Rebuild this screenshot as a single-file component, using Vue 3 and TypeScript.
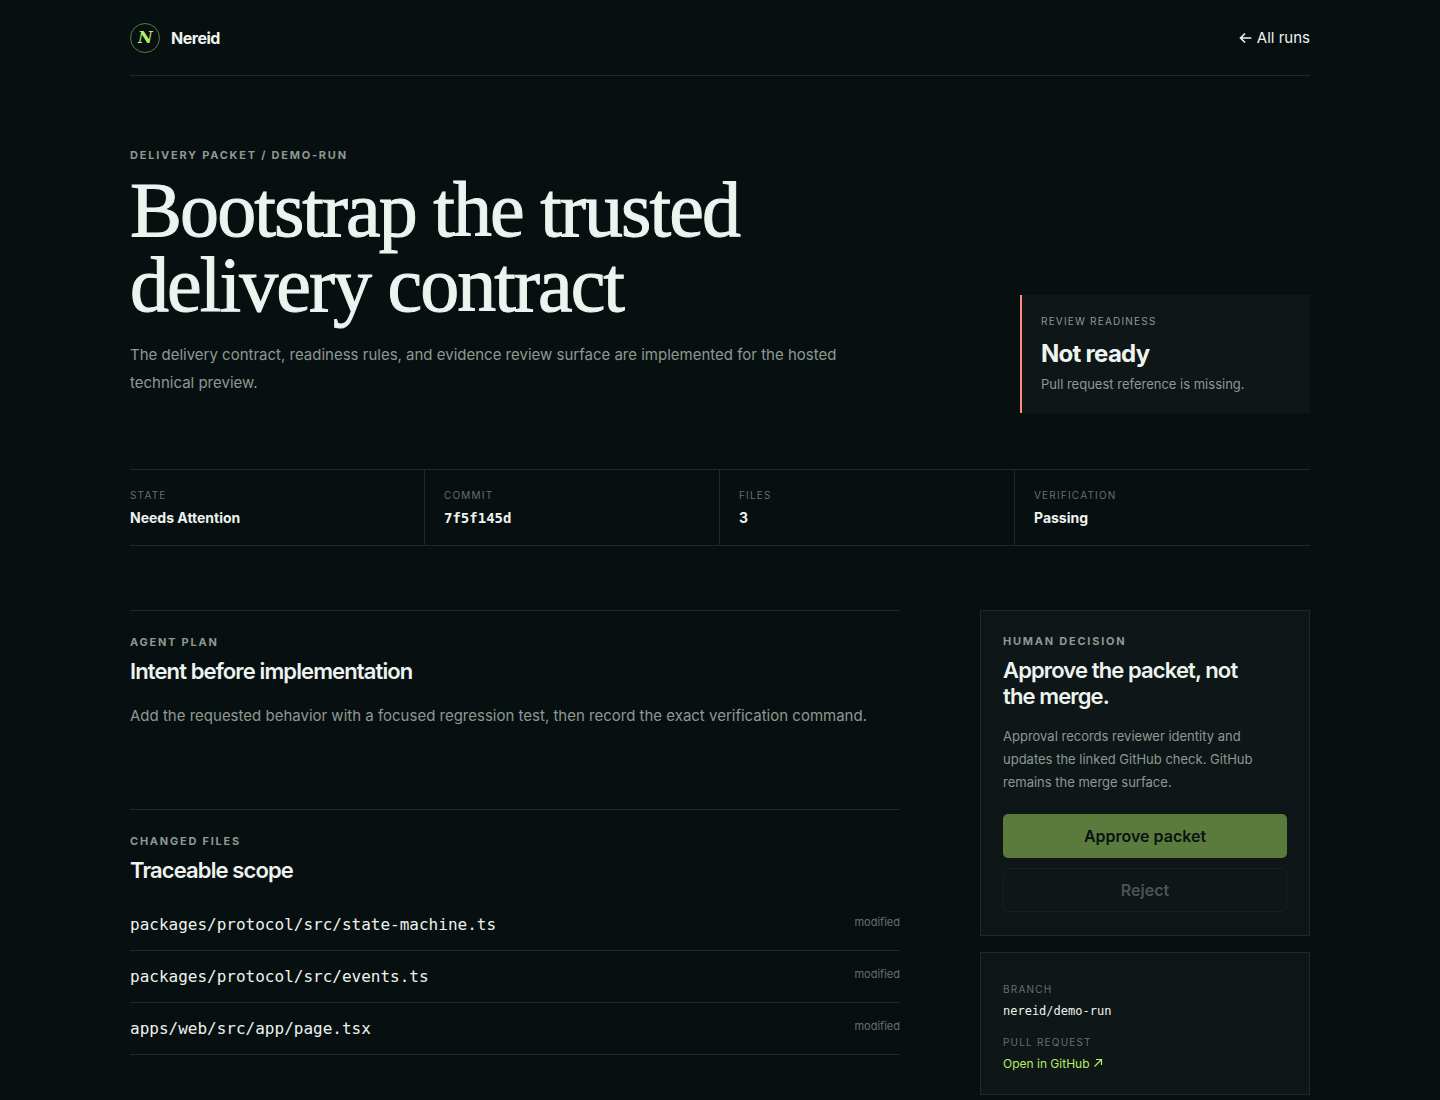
<script setup lang="ts">
interface Fact {
  label: string
  value: string
  mono?: boolean
}

interface ChangedFile {
  path: string
  status: string
}

const facts: Fact[] = [
  { label: 'State', value: 'Needs Attention' },
  { label: 'Commit', value: '7f5f145d', mono: true },
  { label: 'Files', value: '3' },
  { label: 'Verification', value: 'Passing' },
]

const files: ChangedFile[] = [
  { path: 'packages/protocol/src/state-machine.ts', status: 'modified' },
  { path: 'packages/protocol/src/events.ts', status: 'modified' },
  { path: 'apps/web/src/app/page.tsx', status: 'modified' },
]
</script>

<template>
  <div class="page">
    <header class="topbar">
      <a class="brand" href="#">
        <span class="mark">N</span>
        <span>Nereid</span>
      </a>
      <a class="back" href="#">
        <svg class="arrow" viewBox="0 0 12 12" aria-hidden="true">
          <path d="M11.8 6H1M5.5 1.5L1 6l4.5 4.5" />
        </svg>
        All runs
      </a>
    </header>

    <section class="hero">
      <div class="intro">
        <p class="eyebrow">Delivery packet / demo-run</p>
        <h1>Bootstrap the trusted delivery contract</h1>
        <p class="lede">
          The delivery contract, readiness rules, and evidence review surface are implemented for
          the hosted technical preview.
        </p>
      </div>
      <div class="readiness">
        <span class="readiness-label">Review readiness</span>
        <strong>Not ready</strong>
        <p>Pull request reference is missing.</p>
      </div>
    </section>

    <dl class="facts">
      <div v-for="fact in facts" :key="fact.label" class="fact">
        <dt class="label">{{ fact.label }}</dt>
        <dd :class="{ mono: fact.mono }">{{ fact.value }}</dd>
      </div>
    </dl>

    <div class="columns">
      <main>
        <section class="block plan">
          <p class="eyebrow">Agent plan</p>
          <h2>Intent before implementation</h2>
          <p class="copy">
            Add the requested behavior with a focused regression test, then record the exact
            verification command.
          </p>
        </section>
        <section class="block">
          <p class="eyebrow">Changed files</p>
          <h2>Traceable scope</h2>
          <ul class="files">
            <li v-for="file in files" :key="file.path">
              <code>{{ file.path }}</code>
              <span>{{ file.status }}</span>
            </li>
          </ul>
        </section>
      </main>

      <aside>
        <section class="panel decision">
          <p class="eyebrow">Human decision</p>
          <h2>Approve the packet, not the merge.</h2>
          <p class="note">
            Approval records reviewer identity and updates the linked GitHub check. GitHub remains
            the merge surface.
          </p>
          <div class="actions">
            <button class="approve" type="button" disabled>Approve packet</button>
            <button class="reject" type="button" disabled>Reject</button>
          </div>
        </section>
        <dl class="panel refs">
          <div>
            <dt class="label">Branch</dt>
            <dd class="mono">nereid/demo-run</dd>
          </div>
          <div>
            <dt class="label">Pull request</dt>
            <dd>
              <a href="#">
                Open in GitHub
                <svg class="out" viewBox="0 0 10 10" aria-hidden="true">
                  <path d="M1.5 8.5l7-7M3 1.5h5.5V7" />
                </svg>
              </a>
            </dd>
          </div>
        </dl>
      </aside>
    </div>
  </div>
</template>

<style>
body {
  margin: 0;
  background: #080f11;
}
</style>

<style scoped>
.page {
  --text: #edf3ee;
  --muted: #8d9991;
  --faint: #667069;
  --line: #20292a;
  --panel: #0e1618;
  --accent: #b5ef69;
  box-sizing: border-box;
  max-width: 1220px;
  margin: 0 auto;
  padding: 0 20px;
  color: var(--text);
  font: 15px/20px Inter, "Liberation Sans", sans-serif;
}

p,
h1,
h2,
dl,
dd,
ul {
  margin: 0;
  padding: 0;
}

a {
  color: inherit;
  text-decoration: none;
}

.topbar {
  display: flex;
  align-items: center;
  justify-content: space-between;
  height: 75px;
  border-bottom: 1px solid var(--line);
}

.brand {
  display: flex;
  align-items: center;
  gap: 11px;
  font-size: 16px;
  font-weight: 700;
  letter-spacing: -0.03em;
}

.mark {
  display: grid;
  place-items: center;
  box-sizing: border-box;
  width: 30px;
  height: 30px;
  border: 1px solid #587b3c;
  border-radius: 50%;
  color: var(--accent);
  font: italic 700 16px/20px "DejaVu Serif", serif;
}

.back {
  display: flex;
  align-items: center;
  gap: 5px;
}

.arrow,
.out {
  fill: none;
  stroke: currentColor;
}

.arrow {
  width: 13px;
  height: 12px;
  stroke-width: 1.6;
}

.hero {
  display: grid;
  grid-template-columns: minmax(0, 1fr) 290px;
  gap: 80px;
  align-items: end;
  padding: 70px 0 56px;
}

.intro {
  padding-bottom: 16px;
}

.eyebrow {
  color: var(--muted);
  font-size: 11px;
  font-weight: 700;
  line-height: 18px;
  letter-spacing: 0.16em;
  text-transform: uppercase;
}

h1 {
  max-width: 760px;
  margin: 8px 0 19px;
  font: 400 78px/75px "Liberation Serif", serif;
  letter-spacing: -0.025em;
  -webkit-text-stroke: 1px currentColor;
}

.lede {
  max-width: 720px;
  color: var(--muted);
  line-height: 28px;
}

.readiness {
  display: grid;
  padding: 18px 19px;
  border-left: 2px solid #ff8b7b;
  background: var(--panel);
}

.readiness-label {
  color: var(--muted);
  font-size: 10px;
  line-height: 16px;
  letter-spacing: 0.12em;
  text-transform: uppercase;
}

.readiness strong {
  margin: 10px 0 5px;
  font-size: 24px;
  line-height: 30px;
  letter-spacing: -0.03em;
}

.readiness p {
  padding-bottom: 1px;
  color: var(--muted);
  font-size: 13px;
}

.label {
  color: var(--faint);
  font-size: 10px;
  line-height: 16px;
  letter-spacing: 0.12em;
  text-transform: uppercase;
}

.mono,
code {
  font-family: "DejaVu Sans Mono", "Liberation Mono", monospace;
}

code {
  font-size: 16px;
}

.facts {
  display: grid;
  grid-template-columns: repeat(4, 1fr);
  border: solid var(--line);
  border-width: 1px 0;
}

.fact {
  padding: 17px 19px;
  border-right: 1px solid var(--line);
}

.fact:first-child {
  padding-left: 0;
}

.fact:last-child {
  border-right: 0;
}

.fact dd {
  margin-top: 5px;
  font-size: 14px;
  font-weight: 700;
}

.columns {
  display: grid;
  grid-template-columns: minmax(0, 1fr) 330px;
  gap: 80px;
  align-items: start;
  padding-top: 64px;
}

.block {
  padding-top: 22px;
  border-top: 1px solid var(--line);
}

.plan {
  padding-bottom: 79px;
}

h2 {
  margin-top: 7px;
  font-size: 22px;
  font-weight: 600;
  line-height: 26px;
  letter-spacing: -0.04em;
}

.copy {
  margin-top: 18px;
  color: var(--muted);
  line-height: 28px;
}

.files {
  margin-top: 16px;
  list-style: none;
}

.files li {
  display: flex;
  justify-content: space-between;
  padding: 16px 0 15px;
  border-bottom: 1px solid var(--line);
}

.files span {
  color: var(--faint);
  font-size: 11px;
  line-height: 14px;
}

aside {
  display: grid;
  gap: 16px;
}

.panel {
  padding: 22px;
  border: 1px solid var(--line);
  background: var(--panel);
}

.decision {
  padding: 21px 22px 23px;
}

.decision h2 {
  max-width: 250px;
}

.note {
  margin: 16px 0 20px;
  color: var(--muted);
  font-size: 13px;
  line-height: 23px;
}

.actions {
  display: grid;
  gap: 10px;
}

button {
  height: 44px;
  border: 1px solid transparent;
  border-radius: 5px;
  font: 600 16px/20px Inter, "Liberation Sans", sans-serif;
}

.approve {
  background: #5b7b3d;
  color: #0a1211;
}

.reject {
  border-color: #171f21;
  background: transparent;
  color: #4c5453;
}

.refs {
  display: grid;
  gap: 13px;
  padding: 28px 22px 20px;
  font-size: 12px;
}

.refs dd {
  margin-top: 4px;
}

.refs a {
  color: var(--accent);
}

.out {
  width: 10px;
  height: 10px;
  stroke-width: 1.2;
}
</style>
